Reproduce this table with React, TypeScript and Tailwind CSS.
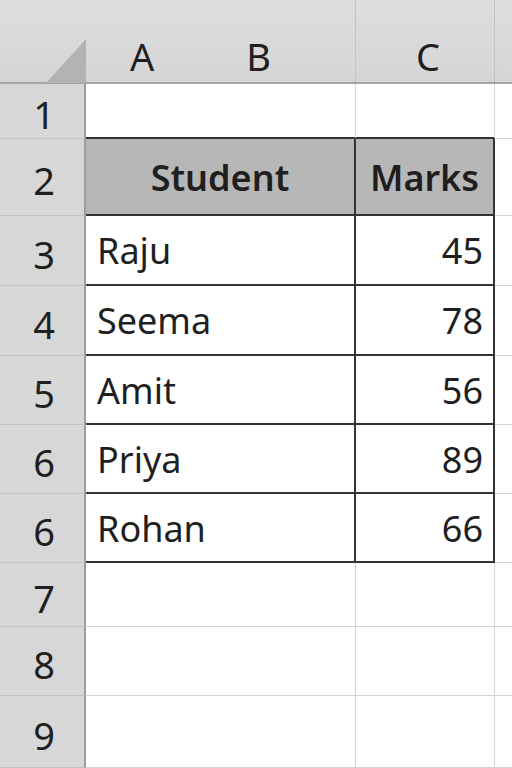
import React from 'react';

const rows = [
  { label: '1', h: 'h-[55px]', kind: 'blank-top' },
  { label: '2', h: 'h-[77px]', kind: 'head' },
  { label: '3', h: 'h-[70px]', kind: 'data', name: 'Raju', marks: '45' },
  { label: '4', h: 'h-[70px]', kind: 'data', name: 'Seema', marks: '78' },
  { label: '5', h: 'h-[69px]', kind: 'data', name: 'Amit', marks: '56' },
  { label: '6', h: 'h-[69px]', kind: 'data', name: 'Priya', marks: '89' },
  { label: '6', h: 'h-[69px]', kind: 'data', name: 'Rohan', marks: '66' },
  { label: '7', h: 'h-[64px]', kind: 'blank' },
  { label: '8', h: 'h-[69px]', kind: 'blank' },
  { label: '9', h: 'h-[72px]', kind: 'blank' },
];

export default function App() {
  return (
    <div
      className="w-[512px] h-[768px] overflow-hidden bg-white text-[#1f1f1f]"
      style={{ fontFamily: '"Noto Sans", "Open Sans", sans-serif' }}
    >
      {/* Column headers */}
      <div className="flex h-[84px] bg-gradient-to-b from-[#dedede] to-[#d5d5d5] border-b-2 border-[#a6a6a6]">
        <div className="w-[86px] shrink-0 flex items-end justify-end">
          <svg width="40" height="44" viewBox="0 0 40 44" className="mb-[-1px]">
            <polygon points="0,44 40,44 40,0" fill="#b3b3b3" />
          </svg>
        </div>
        <div className="w-[270px] shrink-0 flex items-end pl-[44px] gap-[92px] pb-[7px] text-[38px] leading-none border-r border-[#c4c4c4]">
          <span>A</span>
          <span>B</span>
        </div>
        <div className="w-[139px] shrink-0 flex items-end justify-center pb-[7px] pl-[6px] text-[38px] leading-none border-r border-[#c4c4c4]">
          <span>C</span>
        </div>
        <div className="flex-1" />
      </div>

      {rows.map((r, i) => {
        const inTable = r.kind === 'head' || r.kind === 'data';
        const nextInTable = rows[i + 1] && (rows[i + 1].kind === 'head' || rows[i + 1].kind === 'data');
        const bottom = inTable || nextInTable ? 'border-b-2 border-b-[#333]' : 'border-b border-b-[#d4d4d4]';
        const right = inTable ? 'border-r-2 border-r-[#333]' : 'border-r border-r-[#d4d4d4]';
        const fill = r.kind === 'head' ? 'bg-[#b7b7b7]' : 'bg-white';
        return (
          <div key={i} className={`flex ${r.h}`}>
            <div className="w-[86px] shrink-0 flex items-center justify-center bg-[#d7d7d7] border-b border-[#c2c2c2] border-r-2 border-r-[#9c9c9c] text-[38px] leading-none pt-[6px] pl-[4px]">
              {r.label}
            </div>
            <div className={`w-[270px] shrink-0 flex items-center ${fill} ${bottom} ${right} ${r.kind === 'head' ? 'justify-center font-semibold' : 'pl-[11px]'} text-[36px] leading-none pt-[2px]`}>
              {r.kind === 'head' ? 'Student' : r.name}
            </div>
            <div className={`w-[139px] shrink-0 flex items-center ${fill} ${bottom} ${right} ${r.kind === 'head' ? 'justify-center font-semibold' : 'justify-end pr-[10px]'} text-[36px] leading-none pt-[2px]`}>
              {r.kind === 'head' ? 'Marks' : r.marks}
            </div>
            <div className="flex-1 border-b border-[#d4d4d4]" />
          </div>
        );
      })}
    </div>
  );
}
